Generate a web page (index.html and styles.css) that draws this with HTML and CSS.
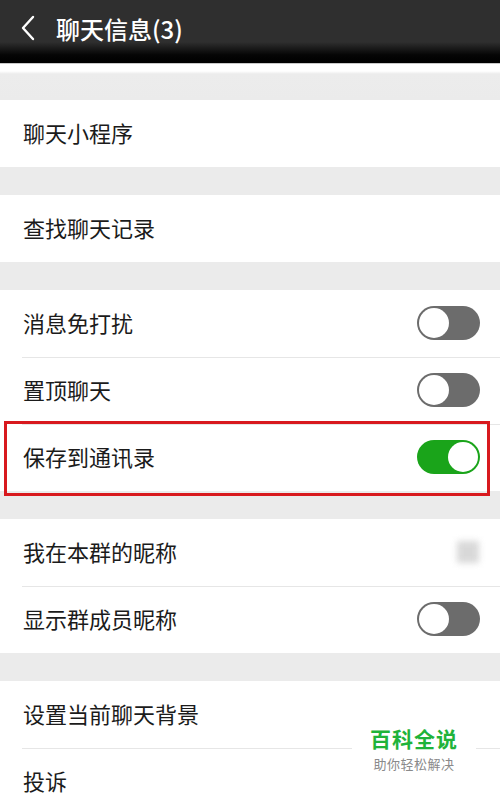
FILE: index.html
```html
<!DOCTYPE html>
<html>
<head>
<meta charset="utf-8">
<link rel="stylesheet" href="styles.css">
</head>
<body>
<div class="page">
  <header class="topbar">
    <svg class="back" width="16" height="26" viewBox="0 0 16 26"><path d="M13 2 L3 13 L13 24" fill="none" stroke="#fff" stroke-width="2.4" stroke-linecap="round" stroke-linejoin="round"/></svg>
    <span class="title">聊天信息(3)</span>
  </header>
  <div class="gap first"></div>
  <div class="group">
    <div class="row"><span class="label">聊天小程序</span></div>
  </div>
  <div class="gap"></div>
  <div class="group">
    <div class="row"><span class="label">查找聊天记录</span></div>
  </div>
  <div class="gap"></div>
  <div class="group">
    <div class="row"><span class="label">消息免打扰</span><span class="switch"></span></div>
    <div class="row"><span class="label">置顶聊天</span><span class="switch"></span></div>
    <div class="row highlight"><span class="label">保存到通讯录</span><span class="switch on"></span></div>
  </div>
  <div class="gap"></div>
  <div class="group">
    <div class="row"><span class="label">我在本群的昵称</span><span class="avatar"></span></div>
    <div class="row"><span class="label">显示群成员昵称</span><span class="switch"></span></div>
  </div>
  <div class="gap"></div>
  <div class="group">
    <div class="row"><span class="label">设置当前聊天背景</span></div>
    <div class="row"><span class="label">投诉</span></div>
  </div>
  <div class="watermark">
    <div class="wm-title">百科全说</div>
    <div class="wm-sub">助你轻松解决</div>
  </div>
</div>
</body>
</html>
```
FILE: styles.css
```css
* { box-sizing: border-box; }
html, body { margin: 0; padding: 0; }
body {
  width: 500px;
  height: 800px;
  overflow: hidden;
  background: #ebebeb;
  font-family: "Noto Sans CJK SC", "Noto Sans", sans-serif;
}
.page { position: relative; width: 500px; height: 800px; }
.topbar {
  height: 64px;
  display: flex;
  align-items: center;
  padding: 0 0 6px 20px;
  gap: 20px;
  background: linear-gradient(#2f2f2f 0, #2f2f2f 42px, #050505 55px, #000 63px, #c8c8c8 63px);
}
.back { flex: none; margin-top: -2px; }
.title {
  color: #fff;
  font-size: 24px;
  font-weight: 500;
  line-height: 1;
}
.gap { height: 28px; background: #ebebeb; }
.gap.first {
  height: 36px;
  background: linear-gradient(#fff 0, #fff 7px, #ececec 10px, #ebebeb 100%);
}
.group { background: #fff; }
.row {
  height: 67px;
  margin-left: 22px;
  padding: 0 20px 2px 0;
  display: flex;
  align-items: center;
  justify-content: space-between;
  border-top: 1px solid #e6e6e6;
  position: relative;
}
.row:first-child { border-top: none; }
.label {
  font-size: 22px;
  color: #1b1b1b;
  line-height: 1;
  margin-left: 1px;
  padding-bottom: 2px;
}
.switch {
  width: 63px;
  height: 34px;
  border-radius: 17px;
  background: #6c6c6c;
  position: relative;
  flex: none;
}
.switch::after {
  content: "";
  position: absolute;
  left: 2px;
  top: 2px;
  width: 30px;
  height: 30px;
  border-radius: 50%;
  background: #fff;
}
.switch.on { background: #1aa41a; }
.switch.on::after { left: 31px; }
.highlight::before {
  content: "";
  position: absolute;
  left: -18px;
  right: 10px;
  top: -4px;
  bottom: -5px;
  border: 3px solid #d8191e;
  pointer-events: none;
}
.avatar {
  width: 22px;
  height: 22px;
  margin-right: 1px;
  background: #cfcfcf;
  filter: blur(3px);
  opacity: 0.8;
}
.watermark {
  position: absolute;
  left: 352px;
  top: 723px;
  width: 124px;
  padding: 0 0 4px;
  background: #fff;
  text-align: center;
}
.wm-title {
  color: #1fb33a;
  font-size: 21px;
  font-weight: 700;
  line-height: 31px;
  letter-spacing: 1px;
}
.wm-sub {
  color: #8a8a8a;
  font-size: 13px;
  line-height: 19px;
  letter-spacing: 0.5px;
}
```
